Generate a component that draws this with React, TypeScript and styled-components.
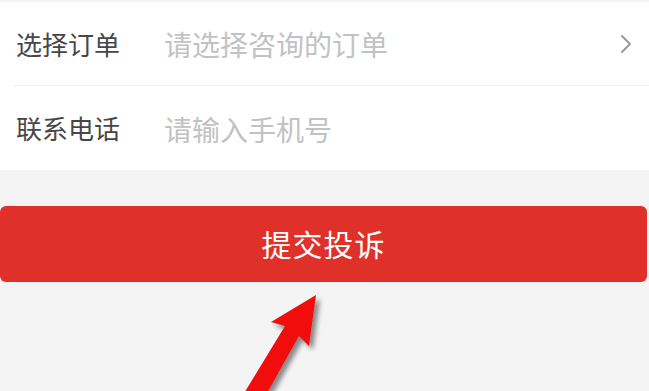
import React from "react";
import styled, { createGlobalStyle } from "styled-components";

const Global = createGlobalStyle`
  html, body { margin: 0; padding: 0; background: #f4f4f4; }
  body { font-family: "Noto Sans CJK SC", "Noto Sans", sans-serif; }
  * { box-sizing: border-box; }
`;

const Page = styled.div`
  position: relative;
  width: 649px;
  height: 391px;
  overflow: hidden;
  background: #f4f4f4;
  padding-top: 2px;
`;

const Card = styled.div`
  background: #ffffff;
  display: flex;
  flex-direction: column;
`;

const Row = styled.div<{ $h: number }>`
  height: ${(p) => p.$h}px;
  display: flex;
  align-items: center;
  padding: 0 17px 0 16px;
`;

const Divider = styled.div`
  height: 1px;
  margin-left: 14px;
  background: #ededed;
`;

const Label = styled.span`
  width: 148px;
  flex-shrink: 0;
  font-size: 26px;
  color: #474747;
  line-height: 1;
`;

const Placeholder = styled.span<{ $dy?: number }>`
  flex: 1;
  font-size: 28px;
  color: #c2c2c2;
  line-height: 1;
  padding-top: ${(p) => p.$dy ?? 0}px;
`;

const Chevron = styled.svg`
  width: 12px;
  height: 20px;
  flex-shrink: 0;
`;

const Button = styled.button`
  display: flex;
  align-items: center;
  justify-content: center;
  margin: 36px 2px 0 0;
  width: 647px;
  height: 76px;
  border: none;
  border-radius: 6px;
  background: #e0302a;
  color: #ffffff;
  font-family: "Noto Sans CJK SC", "Noto Sans", sans-serif;
  font-size: 30px;
  letter-spacing: 1px;
  padding: 0 0 2px;
`;

const Arrow = styled.svg`
  position: absolute;
  left: 0;
  top: 0;
  width: 649px;
  height: 391px;
  pointer-events: none;
`;

export default function App() {
  return (
    <>
      <Global />
      <Page>
        <Card>
          <Row $h={83}>
            <Label>选择订单</Label>
            <Placeholder>请选择咨询的订单</Placeholder>
            <Chevron viewBox="0 0 12 20">
              <path d="M2 2 L10 10 L2 18" fill="none" stroke="#9a9a9a" strokeWidth="2" strokeLinecap="round" strokeLinejoin="round" />
            </Chevron>
          </Row>
          <Divider />
          <Row $h={84}>
            <Label>联系电话</Label>
            <Placeholder $dy={2}>请输入手机号</Placeholder>
          </Row>
        </Card>
        <Button>提交投诉</Button>
        <Arrow viewBox="0 0 649 391">
          <defs>
            <filter id="sh" x="-30%" y="-30%" width="160%" height="160%">
              <feGaussianBlur in="SourceAlpha" stdDeviation="2.5" />
              <feOffset dx="4" dy="4" result="b" />
              <feComponentTransfer>
                <feFuncA type="linear" slope="0.45" />
              </feComponentTransfer>
              <feMerge>
                <feMergeNode />
                <feMergeNode in="SourceGraphic" />
              </feMerge>
            </filter>
          </defs>
          <polygon
            points="316,295 309,346 299,336 266,395 243,395 285,326 271,322"
            fill="#f20c0c"
            filter="url(#sh)"
          />
        </Arrow>
      </Page>
    </>
  );
}
